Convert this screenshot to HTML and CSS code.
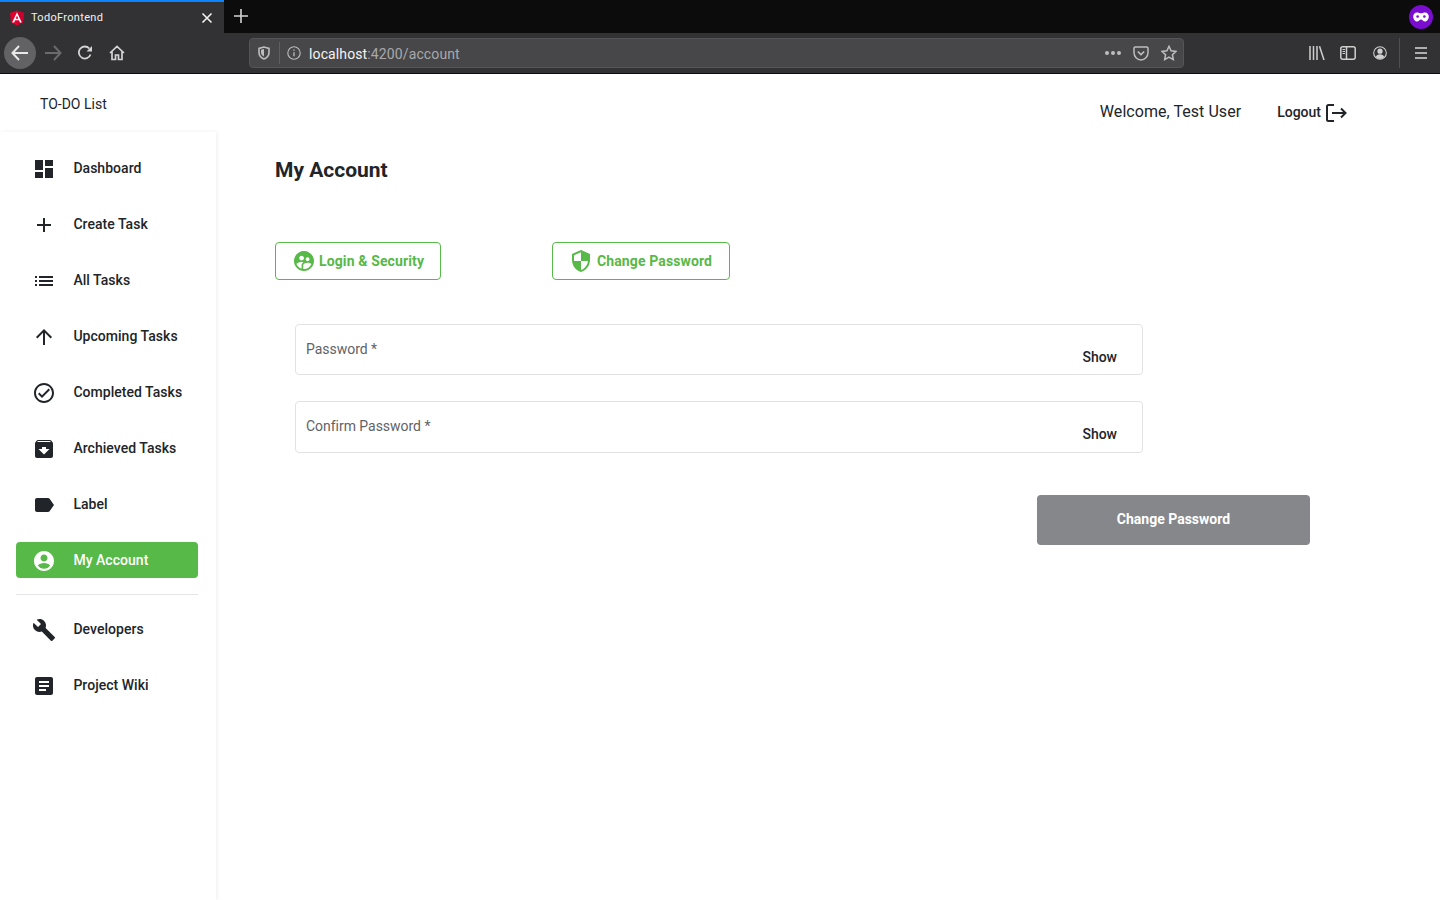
FILE: index.html
```html
<!DOCTYPE html>
<html lang="en">
<head>
<meta charset="utf-8">
<title>TodoFrontend</title>
<link rel="stylesheet" href="styles.css">
</head>
<body>
<div class="browser">
  <div class="tabbar">
    <div class="tab">
      <svg class="fav" width="16" height="16" viewBox="0 0 16 16"><path d="M8 0.5 1 3l1.100 9.300L8 15.500l5.900-3.200L15 3z" fill="#e6002f"/><path d="M8 0.500V15.500l5.900-3.200L15 3z" fill="#cc0030"/><path d="M8 2.300 3.200 12.600h1.900l1-2.300h3.800l1 2.300h1.900zm1.300 6.400H6.700L8 5.600z" fill="#fff"/></svg>
      <span class="tab-title">TodoFrontend</span>
      <svg class="tab-close" width="12" height="12" viewBox="0 0 12 12"><path d="M1.500 1.500l9 9M10.500 1.500l-9 9" stroke="#f1f1f1" stroke-width="1.600" fill="none"/></svg>
    </div>
    <svg class="newtab" width="14" height="14" viewBox="0 0 14 14"><path d="M7 0v14M0 7h14" stroke="#d4d4d4" stroke-width="1.600"/></svg>
    <div class="mask">
      <svg width="16" height="10" viewBox="0 0 16 10"><path d="M4 .5c1.600 0 2.600.8 4 .8s2.400-.8 4-.8c2.300 0 3.800 1.700 3.800 4S14.300 9.500 12 9.500c-1.800 0-2.800-2-4-2s-2.200 2-4 2C1.700 9.500.2 6.800.2 4.500S1.700.5 4 .5z" fill="#fff"/><circle cx="4.600" cy="4.500" r="1.300" fill="#7a0dcf"/><circle cx="11.400" cy="4.500" r="1.300" fill="#7a0dcf"/></svg>
    </div>
  </div>
  <div class="toolbar">
    <div class="back">
      <svg width="18" height="16" viewBox="0 0 18 16"><path d="M8 1 1.500 8 8 15M1.500 8H17" stroke="#e8e8e8" stroke-width="2" fill="none"/></svg>
    </div>
    <svg class="forward" width="18" height="16" viewBox="0 0 18 16"><path d="M10 1l6.500 7L10 15M16.500 8H1" stroke="#6b6b6e" stroke-width="2" fill="none"/></svg>
    <svg class="reload" width="16" height="16" viewBox="0 0 16 16"><path d="M13.500 9.500A6 6 0 1 1 12.300 3.500" stroke="#d4d4d5" stroke-width="1.800" fill="none"/><path d="M15 1v5.500H9.500z" fill="#d4d4d5"/></svg>
    <svg class="home" width="16" height="16" viewBox="0 0 16 16"><path d="M1 8l7-6.500L15 8M3 6.500V14.500h3.500V10h3v4.500H13V6.500" stroke="#d4d4d5" stroke-width="1.700" fill="none"/></svg>
    <div class="urlbar">
      <svg class="shield" width="12" height="14" viewBox="0 0 12 14"><path d="M6 1 1 2.400v4.100C1 10 3.500 12 6 13c2.500-1 5-3 5-6.500V2.400z" stroke="#bdbdbf" stroke-width="1.600" fill="none"/><path d="M6 3 3 3.800v2.700c0 2 1.400 3.300 3 4z" fill="#bdbdbf"/></svg>
      <span class="url-sep"></span>
      <svg class="info" width="14" height="14" viewBox="0 0 14 14"><circle cx="7" cy="7" r="6.200" stroke="#bdbdbf" stroke-width="1.100" fill="none"/><path d="M7 6.200v4M7 3.500v1.300" stroke="#bdbdbf" stroke-width="1.300"/></svg>
      <span class="url"><span class="url-host">localhost</span>:4200/account</span>
      <span class="dots"><i></i><i></i><i></i></span>
      <svg class="pocket" width="16" height="15" viewBox="0 0 16 15"><path d="M2.200 1h11.600c.7 0 1.200.5 1.200 1.200v4.300C15 10.500 11.800 14 8 14S1 10.500 1 6.500V2.200C1 1.500 1.500 1 2.200 1z" stroke="#bdbdbf" stroke-width="1.500" fill="none"/><path d="M4.800 5.500 8 8.600l3.200-3.100" stroke="#bdbdbf" stroke-width="1.700" fill="none"/></svg>
      <svg class="star" width="16" height="16" viewBox="0 0 16 16"><path d="M8 1.300l2.100 4.500 4.900.6-3.600 3.300.9 4.900L8 12.200l-4.300 2.400.9-4.900L1 6.400l4.900-.6z" stroke="#bdbdbf" stroke-width="1.500" fill="none"/></svg>
    </div>
    <svg class="library" width="16" height="14" viewBox="0 0 16 14"><path d="M1 0v14M4.500 0v14M8 0v14M10.500 .3 15 14" stroke="#cfcfd0" stroke-width="1.500" fill="none"/></svg>
    <svg class="sidebar-ic" width="16" height="14" viewBox="0 0 16 14"><rect x=".8" y=".8" width="14.400" height="12.400" rx="2" stroke="#cfcfd0" stroke-width="1.500" fill="none"/><path d="M6.500 1v12" stroke="#cfcfd0" stroke-width="1.500"/><path d="M2.500 3.500h2.500M2.500 5.500h2.500M2.500 7.500h2.500" stroke="#cfcfd0"/></svg>
    <svg class="profile" width="14" height="14" viewBox="0 0 14 14"><circle cx="7" cy="7" r="6.300" stroke="#cfcfd0" stroke-width="1.100" fill="none"/><circle cx="7" cy="5.200" r="2.600" fill="#cfcfd0"/><path d="M2.700 11c.7-2 2.300-2.800 4.300-2.800s3.600.8 4.300 2.800c-1.100 1.200-2.600 1.900-4.300 1.900s-3.200-.7-4.300-1.900z" fill="#cfcfd0"/></svg>
    <span class="tool-sep"></span>
    <svg class="menu" width="12" height="12" viewBox="0 0 12 12"><path d="M0 1h12M0 6h12M0 11h12" stroke="#d8d8d9" stroke-width="1.500"/></svg>
  </div>
</div>

<div class="app">
  <header class="topbar">
    <span class="brand">TO-DO List</span>
    <div class="userbox">
      <span class="welcome">Welcome, Test User</span>
      <a class="logout">Logout
        <svg width="21" height="18" viewBox="0 0 21 18"><path d="M8 1H2.500C1.700 1 1 1.700 1 2.500v13c0 .8.700 1.500 1.500 1.500H8" stroke="#212529" stroke-width="2" fill="none"/><path d="M6 9h13.500M15 4.500 19.500 9 15 13.500" stroke="#212529" stroke-width="2" fill="none"/></svg>
      </a>
    </div>
  </header>
  <div class="body">
    <nav class="side">
      <a class="item"><svg viewBox="0 0 24 24"><path d="M3 13h8V3H3zm0 8h8v-6H3zm10 0h8V11h-8zm0-18v6h8V3z"/></svg>Dashboard</a>
      <a class="item"><svg viewBox="0 0 24 24"><path d="M19 13h-6v6h-2v-6H5v-2h6V5h2v6h6z"/></svg>Create Task</a>
      <a class="item"><svg viewBox="0 0 24 24"><path d="M3 13h2v-2H3zm0 4h2v-2H3zm0-8h2V7H3zm4 4h14v-2H7zm0 4h14v-2H7zM7 7v2h14V7z"/></svg>All Tasks</a>
      <a class="item"><svg viewBox="0 0 24 24"><path d="M4 12l1.410 1.410L11 7.830V20h2V7.830l5.580 5.590L20 12l-8-8z"/></svg>Upcoming Tasks</a>
      <a class="item"><svg viewBox="0 0 24 24"><path d="M12 2C6.480 2 2 6.480 2 12s4.480 10 10 10 10-4.480 10-10S17.520 2 12 2zm0 18c-4.410 0-8-3.590-8-8s3.590-8 8-8 8 3.590 8 8-3.590 8-8 8zm4.590-12.420L10 14.170l-2.590-2.580L6 13l4 4 8-8z"/></svg>Completed Tasks</a>
      <a class="item"><svg viewBox="0 0 24 24"><path d="M20.540 5.230l-1.390-1.680C18.880 3.210 18.470 3 18 3H6c-.47 0-.88.21-1.160.55L3.460 5.230C3.170 5.570 3 6.020 3 6.500V19c0 1.100.9 2 2 2h14c1.100 0 2-.9 2-2V6.500c0-.48-.17-.93-.46-1.270zM12 17.500L6.500 12H10v-2h4v2h3.500L12 17.500zM5.120 5l.81-1h12l.94 1H5.120z"/></svg>Archieved Tasks</a>
      <a class="item"><svg viewBox="0 0 24 24"><path d="M17.630 5.840C17.270 5.330 16.670 5 16 5L5 5.010C3.900 5.010 3 5.900 3 7v10c0 1.100.9 1.990 2 1.990L16 19c.67 0 1.270-.33 1.630-.84L22 12z"/></svg>Label</a>
      <a class="item active"><svg viewBox="0 0 24 24"><path d="M12 2C6.480 2 2 6.480 2 12s4.480 10 10 10 10-4.480 10-10S17.520 2 12 2zm0 3.500c1.900 0 3.500 1.600 3.500 3.500s-1.600 3.500-3.500 3.500-3.500-1.600-3.500-3.500 1.600-3.500 3.500-3.500zm0 14.300c-2.600 0-4.800-1.300-6.200-3.300 1-1.600 3.900-2.500 6.200-2.500s5.200.9 6.200 2.500c-1.400 2-3.600 3.300-6.200 3.300z"/></svg>My Account</a>
      <hr class="divider">
      <a class="item"><svg viewBox="0 0 24 24"><path d="M22.700 19l-9.100-9.100c.9-2.300.4-5-1.500-6.900-2-2-5-2.400-7.400-1.300L9 6 6 9 1.600 4.700C.4 7.100.9 10.100 2.900 12.100c1.900 1.900 4.600 2.400 6.900 1.500l9.100 9.100c.4.400 1 .4 1.400 0l2.300-2.300c.5-.4.500-1.100.1-1.400z"/></svg>Developers</a>
      <a class="item"><svg viewBox="0 0 24 24"><path d="M19 3H5c-1.100 0-2 .9-2 2v14c0 1.100.9 2 2 2h14c1.100 0 2-.9 2-2V5c0-1.100-.9-2-2-2zm-5 14H7v-2h7zm3-4H7v-2h10zm0-4H7V7h10z"/></svg>Project Wiki</a>
    </nav>
    <main class="main">
      <h1 class="title">My Account</h1>
      <div class="tabs">
        <a class="pill pill-login"><svg viewBox="0 0 24 24"><path d="M11.990 2c-5.520 0-10 4.480-10 10s4.480 10 10 10 10-4.480 10-10-4.480-10-10-10zm3.610 6.340c1.070 0 1.930.86 1.930 1.930 0 1.070-.86 1.930-1.930 1.930-1.070 0-1.930-.86-1.930-1.930-.01-1.070.86-1.930 1.930-1.930zm-6-1.580c1.300 0 2.360 1.060 2.360 2.360 0 1.300-1.060 2.360-2.360 2.360s-2.360-1.060-2.360-2.360c0-1.310 1.050-2.360 2.360-2.360zm0 9.130v3.750c-2.400-.75-4.300-2.600-5.140-4.960 1.050-1.120 3.670-1.690 5.140-1.690.53 0 1.200.08 1.900.22-1.640.87-1.900 2.020-1.900 2.680zM11.990 20c-.27 0-.53-.01-.79-.04v-4.070c0-1.420 2.940-2.130 4.400-2.130 1.070 0 2.920.39 3.840 1.150-1.170 2.950-4.050 5.090-7.450 5.090z"/></svg>Login &amp; Security</a>
        <a class="pill pill-change"><svg viewBox="0 0 24 24"><path d="M12 1 3 5v6c0 5.550 3.840 10.740 9 12 5.160-1.260 9-6.450 9-12V5l-9-4zm0 10.990h7c-.53 4.120-3.280 7.790-7 8.940V12H5V6.300l7-3.110v8.800z"/></svg>Change Password</a>
      </div>
      <form class="form">
        <div class="field field-one"><span class="label">Password *</span><span class="show">Show</span></div>
        <div class="field field-two"><span class="label">Confirm Password *</span><span class="show">Show</span></div>
        <div class="actions"><button type="button" class="submit">Change Password</button></div>
      </form>
    </main>
  </div>
</div>
</body>
</html>
```
FILE: styles.css
```css
* { box-sizing: border-box; }
html, body { margin: 0; height: 100%; }
body { font-family: Roboto, "Liberation Sans", sans-serif; color: #212529; background: #fff; overflow: hidden; display: flex; flex-direction: column; height: 900px; }

.browser { flex: none; height: 74px; background: #0c0c0d; display: flex; flex-direction: column; font-family: Inter, "Liberation Sans", sans-serif; }
.tabbar { height: 33px; display: flex; align-items: center; }
.tab { width: 224px; height: 33px; background: #323234; border-top: 2px solid #0a84ff; display: flex; align-items: center; padding: 0 11px 0 9px; }
.fav { flex: none; }
.tab-title { margin-left: 6px; font-size: 11px; color: #f1f1f1; flex: 1; font-family: Roboto, sans-serif; letter-spacing: .32px; }
.tab-close { flex: none; }
.newtab { margin: -1px 0 0 10px; }
.mask { margin-left: auto; margin-right: 7px; width: 24px; height: 24px; border-radius: 50%; background: #7a0dcf; display: flex; align-items: center; justify-content: center; }
.toolbar { height: 41px; background: #323234; border-bottom: 1px solid #0c0c0d; display: flex; align-items: center; }
.back { width: 32px; height: 32px; border-radius: 50%; background: #626264; margin-left: 4px; display: flex; align-items: center; justify-content: center; flex: none; }
.forward { margin-left: 8px; flex: none; }
.reload { margin-left: 15px; flex: none; }
.home { margin-left: 16px; flex: none; }
.urlbar { margin-left: 124px; width: 935px; height: 30px; background: #474749; border: 1px solid #555557; border-radius: 4px; display: flex; align-items: center; padding-left: 8px; flex: none; }
.shield { flex: none; }
.url-sep { width: 1px; height: 22px; background: #5f5f61; margin-left: 9px; }
.info { margin-left: 7px; flex: none; }
.url { margin: 2px 0 0 8px; font-size: 14px; color: #a9a9ab; flex: 1; font-family: Roboto, sans-serif; letter-spacing: .12px; }
.url-host { color: #f4f4f4; }
.dots { display: flex; gap: 2px; }
.dots i { width: 4px; height: 4px; border-radius: 50%; background: #bdbdbf; display: block; }
.pocket { margin-left: 12px; flex: none; }
.star { margin-left: 12px; margin-right: 6px; flex: none; }
.library { margin-left: 125px; flex: none; }
.sidebar-ic { margin-left: 15px; flex: none; }
.profile { margin-left: 17px; flex: none; }
.tool-sep { width: 1px; height: 30px; background: #4f4f51; margin-left: 12px; }
.menu { margin-left: 15px; flex: none; }

.app { flex: 1; display: flex; flex-direction: column; min-height: 0; }
.topbar { height: 58px; flex: none; display: flex; justify-content: space-between; padding: 0 93px 0 40px; }
.brand { font-size: 14px; line-height: 16px; margin-top: 22px; }
.userbox { display: flex; align-items: center; height: 28px; margin-top: 24px; }
.welcome { font-size: 16px; line-height: 20px; margin-right: 36px; letter-spacing: .05px; }
.logout { display: flex; align-items: center; gap: 5px; font-size: 14px; font-weight: 500; }
.logout svg { margin-top: 1px; }
.body { flex: 1; display: flex; min-height: 0; }
.side { width: 216px; flex: none; padding: 18px 18px 0 16px; box-shadow: 1px 0 4px rgba(0,0,0,.07); display: flex; flex-direction: column; gap: 20px; }
.item { height: 36px; display: flex; align-items: center; padding-left: 16px; border-radius: 4px; font-size: 14px; font-weight: 500; letter-spacing: .03px; color: #212529; flex: none; }
.item svg { width: 24px; height: 24px; fill: #212529; margin: 2px 17.400px 0 0; flex: none; }
.item.active { background: #57b947; color: #fff; }
.item.active svg { fill: #fff; }
.divider { width: 100%; margin: -4px 0; border: 0; border-top: 1px solid #e4e4e4; height: 1px; flex: none; }

.main { flex: 1; padding: 0 0 0 59px; }
.title { font-size: 21px; line-height: 24px; font-weight: 700; margin: 26px 0 0; color: #212529; }
.tabs { display: flex; margin-top: 60px; }
.pill { height: 38px; border: 1px solid #57b947; border-radius: 4px; display: flex; align-items: center; color: #57b947; font-size: 14px; font-weight: 700; letter-spacing: .12px; }
.pill svg { width: 24px; height: 24px; fill: #57b947; flex: none; }
.pill-login { width: 166px; padding-left: 16px; }
.pill-login svg { margin-right: 3px; }
.pill-change { width: 178px; margin-left: 111px; padding-left: 16px; }
.pill-change svg { margin-right: 4px; }
.form { margin: 44px 0 0 20px; width: 1015px; }
.field { width: 848px; border: 1px solid #e2e2e2; border-radius: 4px; display: flex; justify-content: space-between; padding: 0 25px 0 10px; }
.field-one { height: 51px; }
.field-two { height: 52px; margin-top: 26px; }
.label { font-size: 14px; line-height: 16px; color: #5f6368; margin-top: 16px; letter-spacing: -.03px; }
.show { font-size: 14px; font-weight: 500; line-height: 16px; margin-top: 24px; }
.actions { display: flex; justify-content: flex-end; margin-top: 42px; }
.submit { width: 273px; height: 50px; background: #85878b; color: #fff; border: 0; border-radius: 4px; font-family: inherit; font-size: 14px; font-weight: 700; padding: 0 0 2px; }
```
